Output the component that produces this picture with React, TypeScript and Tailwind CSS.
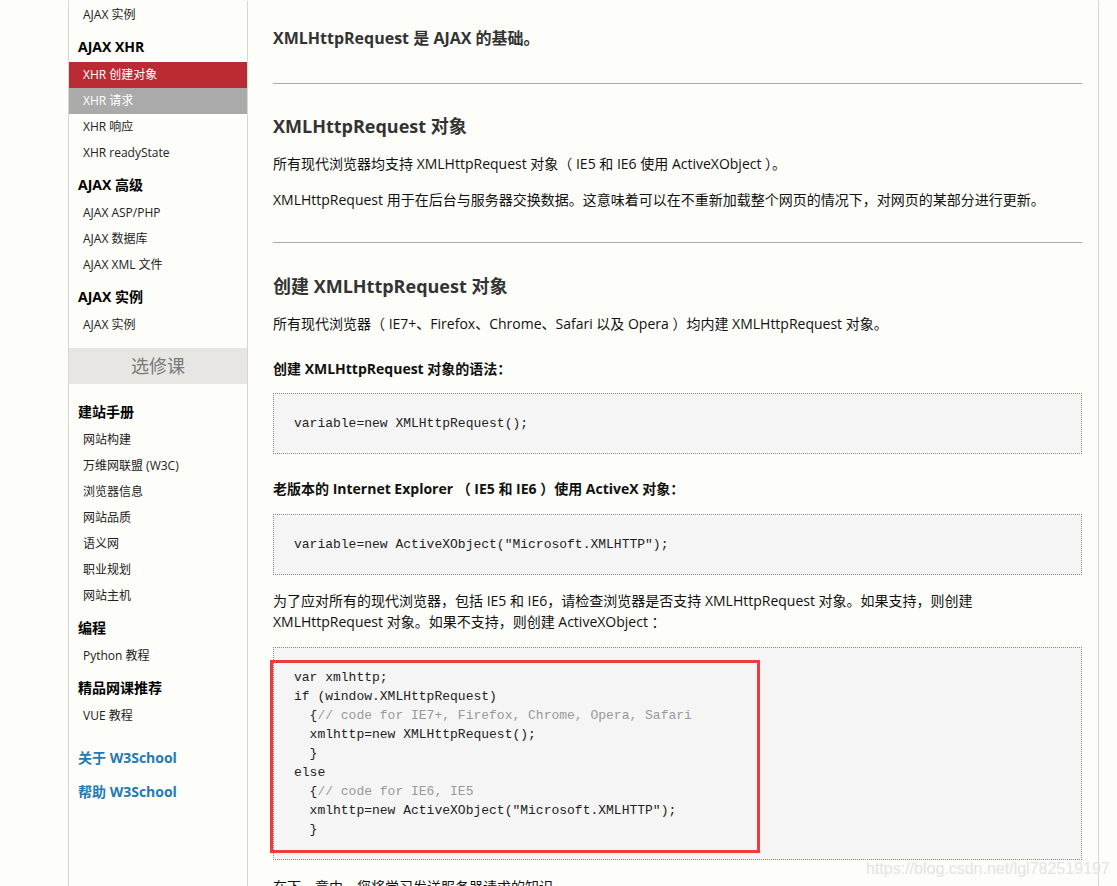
import React from 'react';

const sans = "font-['Open_Sans','Noto_Sans_CJK_SC',sans-serif]";

type NavItem = { label: string; kind?: 'active' | 'hover' };
type NavGroup = { title: string; items: NavItem[] };

const topItems: NavItem[] = [{ label: 'AJAX 实例' }];

const groups: NavGroup[] = [
  {
    title: 'AJAX XHR',
    items: [
      { label: 'XHR 创建对象', kind: 'active' },
      { label: 'XHR 请求', kind: 'hover' },
      { label: 'XHR 响应' },
      { label: 'XHR readyState' },
    ],
  },
  {
    title: 'AJAX 高级',
    items: [{ label: 'AJAX ASP/PHP' }, { label: 'AJAX 数据库' }, { label: 'AJAX XML 文件' }],
  },
  { title: 'AJAX 实例', items: [{ label: 'AJAX 实例' }] },
];

const extraGroups: NavGroup[] = [
  {
    title: '建站手册',
    items: [
      { label: '网站构建' },
      { label: '万维网联盟 (W3C)' },
      { label: '浏览器信息' },
      { label: '网站品质' },
      { label: '语义网' },
      { label: '职业规划' },
      { label: '网站主机' },
    ],
  },
  { title: '编程', items: [{ label: 'Python 教程' }] },
  { title: '精品网课推荐', items: [{ label: 'VUE 教程' }] },
];

function Item({ item }: { item: NavItem }) {
  const base = 'h-[26px] leading-[26px] pl-[14px] text-[12px] whitespace-nowrap';
  if (item.kind === 'active') return <div className={`${base} bg-[#bb2b33] text-white`}>{item.label}</div>;
  if (item.kind === 'hover') return <div className={`${base} bg-[#aaaaaa] text-white`}>{item.label}</div>;
  return <div className={`${base} text-[#222]`}>{item.label}</div>;
}

function Group({ group }: { group: NavGroup }) {
  return (
    <div>
      <div className="pt-[8px] pb-[4px] pl-[9px] leading-[22px] text-[14px] font-bold text-black">{group.title}</div>
      {group.items.map((it) => (
        <Item key={it.label} item={it} />
      ))}
    </div>
  );
}

function Sidebar() {
  return (
    <aside className={`w-[180px] shrink-0 border-l border-r border-[#d6d6d6] bg-[#fdfdf9] ${sans}`}>
      <div className="pt-[1px]">
        {topItems.map((it) => (
          <Item key={it.label} item={it} />
        ))}
      </div>
      {groups.map((g) => (
        <Group key={g.title} group={g} />
      ))}
      <div className="mt-[10px] h-[36px] leading-[36px] bg-[#e7e6e3] text-center text-[18px] text-[#7a7a7a]">选修课</div>
      <div className="pt-[9px]">
        {extraGroups.map((g) => (
          <Group key={g.title} group={g} />
        ))}
      </div>
      <div className="pl-[9px] pt-[12px] pb-[200px] text-[14px] font-bold text-[#1f7bb3]">
        <div className="h-[34px] leading-[34px]">关于 W3School</div>
        <div className="h-[34px] leading-[34px]">帮助 W3School</div>
      </div>
    </aside>
  );
}

function CodeBox({ children }: { children: React.ReactNode }) {
  return (
    <div className="border border-dotted border-[#8a8a7a] bg-[#f5f5f5] px-[20px] py-[20px] font-['Liberation_Mono',monospace] text-[13px] leading-[19px] text-[#222] whitespace-pre">
      {children}
    </div>
  );
}

const cm = 'text-[#999]';

function Content() {
  return (
    <main className={`w-[851px] shrink-0 border-r border-[#d6d6d6] pl-[25px] pr-[16px] text-[14px] text-[#111] ${sans}`}>
      <h1 className="pt-[26px] text-[16px] font-bold leading-[22px] text-[#333]">XMLHttpRequest 是 AJAX 的基础。</h1>
      <hr className="mt-[34px] border-t border-[#aaa]" />

      <h2 className="mt-[30px] text-[18px] font-bold leading-[24px] text-[#333]">XMLHttpRequest 对象</h2>
      <p className="mt-[15px] leading-[22px]">所有现代浏览器均支持 XMLHttpRequest 对象（ IE5 和 IE6 使用 ActiveXObject ）。</p>
      <p className="mt-[14px] leading-[22px]">XMLHttpRequest 用于在后台与服务器交换数据。这意味着可以在不重新加载整个网页的情况下，对网页的某部分进行更新。</p>
      <hr className="mt-[31px] border-t border-[#aaa]" />

      <h2 className="mt-[31px] text-[18px] font-bold leading-[24px] text-[#333]">创建 XMLHttpRequest 对象</h2>
      <p className="mt-[15px] leading-[22px]">所有现代浏览器（ IE7+、Firefox、Chrome、Safari 以及 Opera ）均内建 XMLHttpRequest 对象。</p>
      <p className="mt-[23px] leading-[22px] font-bold">创建 XMLHttpRequest 对象的语法：</p>
      <div className="mt-[13px]">
        <CodeBox>variable=new XMLHttpRequest();</CodeBox>
      </div>

      <p className="mt-[24px] leading-[22px] font-bold">老版本的 Internet Explorer （ IE5 和 IE6 ）使用 ActiveX 对象：</p>
      <div className="mt-[14px]">
        <CodeBox>variable=new ActiveXObject("Microsoft.XMLHTTP");</CodeBox>
      </div>

      <p className="mt-[15px] leading-[21px]">
        为了应对所有的现代浏览器，包括 IE5 和 IE6，请检查浏览器是否支持 XMLHttpRequest 对象。如果支持，则创建
        <br />
        XMLHttpRequest 对象。如果不支持，则创建 ActiveXObject ：
      </p>

      <div className="relative mt-[15px]">
        <CodeBox>
          {'var xmlhttp;\nif (window.XMLHttpRequest)\n  {'}
          <span className={cm}>{'// code for IE7+, Firefox, Chrome, Opera, Safari'}</span>
          {'\n  xmlhttp=new XMLHttpRequest();\n  }\nelse\n  {'}
          <span className={cm}>{'// code for IE6, IE5'}</span>
          {'\n  xmlhttp=new ActiveXObject("Microsoft.XMLHTTP");\n  }'}
        </CodeBox>
        <div className="absolute left-[-3px] top-[13px] h-[193px] w-[490px] border-[3px] border-[#ee3b3b]" />
      </div>

      <p className="mt-[16px] leading-[22px] pb-[40px]">在下一章中，您将学习发送服务器请求的知识。</p>
    </main>
  );
}

export default function App() {
  return (
    <div className="relative h-[886px] w-[1117px] overflow-hidden bg-[#fdfdf9]">
      <div className="flex pl-[68px] mt-[1px]">
        <Sidebar />
        <Content />
      </div>
      <div className="absolute left-[866px] top-[857px] font-['Liberation_Sans',sans-serif] text-[16px] text-[#e4e4e4]">
        https://blog.csdn.net/lgl782519197
      </div>
    </div>
  );
}
